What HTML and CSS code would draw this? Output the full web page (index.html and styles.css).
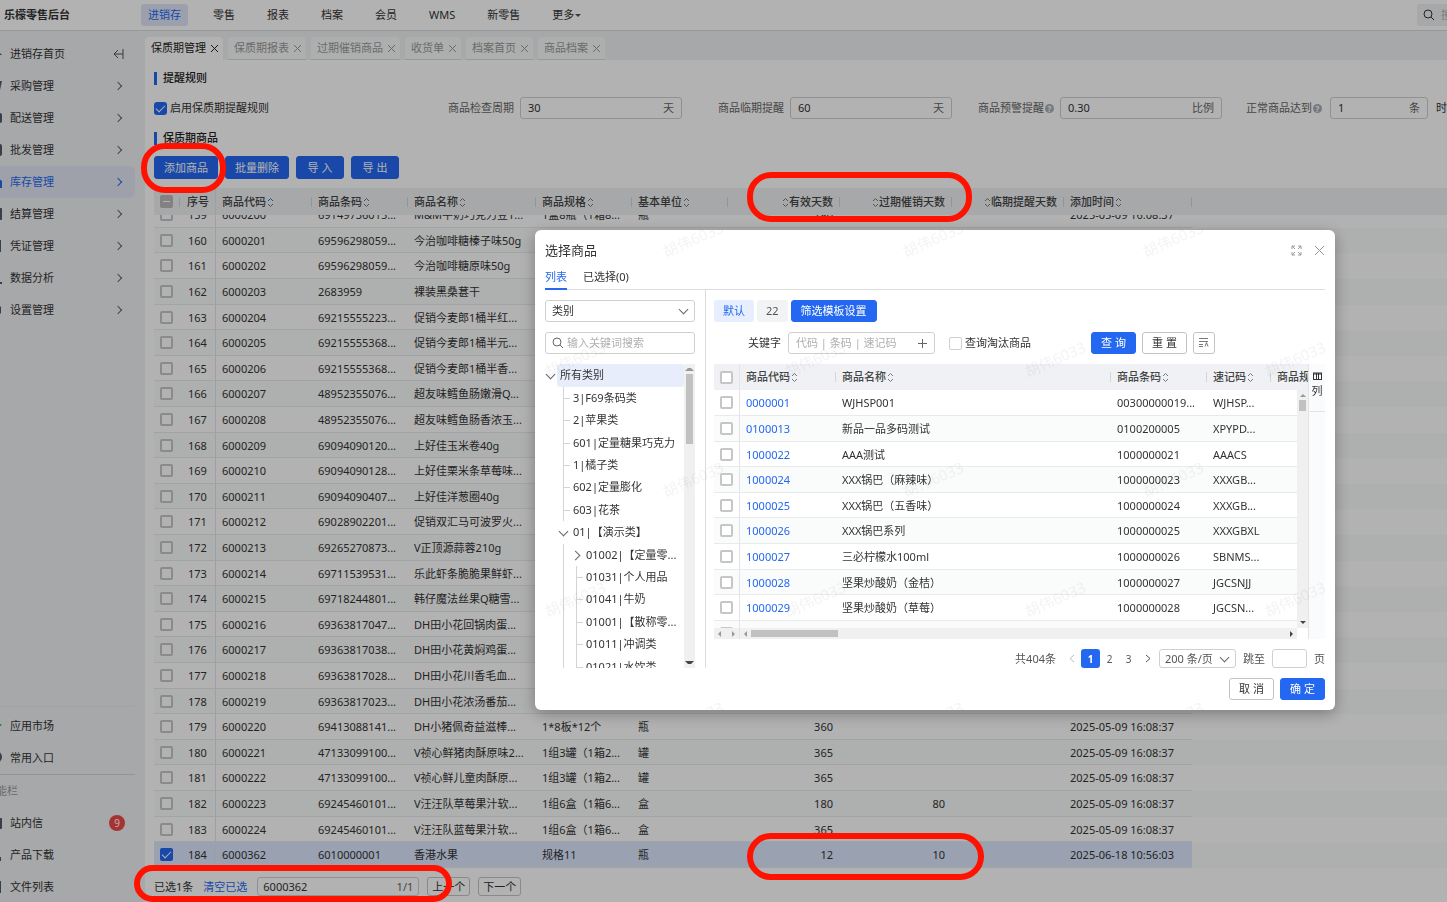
FILE: index.html
```html
<!DOCTYPE html>
<html lang="zh-CN">

<head>
    <meta charset="utf-8">
    <title>保质期管理</title>
    <link rel="stylesheet" href="styles.css">
</head>

<body>
    <div class="app">
        <header class="topbar">
            <span class="brand">乐檬零售后台</span>
            <nav class="topnav">
                <a class="active" href="#">进销存</a>
                <a href="#">零售</a>
                <a href="#">报表</a>
                <a href="#">档案</a>
                <a href="#">会员</a>
                <a href="#">WMS</a>
                <a href="#">新零售</a>
                <a href="#">更多<span class="caret"></span></a>
            </nav>
            <label class="top-search">
                <svg width="12" height="12" viewBox="0 0 12 12"><circle cx="5" cy="5" r="4" /><path d="M8 8l3 3" /></svg>
                <input type="text" placeholder="搜索" aria-label="搜索">
            </label>
        </header>

        <div class="body">
            <aside class="sidebar">
                <ul class="menu">
                    <li><a href="#"><svg class="ico" viewBox="0 0 14 14"><path d="M7 1L14 8H12V13H2V8H0Z" /></svg>进销存首页
                        <svg class="fold" viewBox="0 0 12 12"><path d="M5 2L1 6l4 4M1 6h9M10 1v10" /></svg></a></li>
                    <li><a href="#"><svg class="ico" viewBox="0 0 14 14"><path d="M0 2H14L12 11H2Z" /></svg>采购管理<span class="arrow"></span></a></li>
                    <li><a href="#"><svg class="ico" viewBox="0 0 14 14"><rect y="2" width="14" height="10" rx="2" /></svg>配送管理<span class="arrow"></span></a></li>
                    <li><a href="#"><svg class="ico" viewBox="0 0 14 14"><rect y="1" width="14" height="12" rx="2" /></svg>批发管理<span class="arrow"></span></a></li>
                    <li><a class="active" href="#"><svg class="ico" viewBox="0 0 14 14"><path d="M7 1L14 6V13H0V6Z" /></svg>库存管理<span class="arrow"></span></a></li>
                    <li><a href="#"><svg class="ico" viewBox="0 0 14 14"><rect y="1" width="14" height="12" rx="1" /></svg>结算管理<span class="arrow"></span></a></li>
                    <li><a href="#"><svg class="ico" viewBox="0 0 14 14"><rect y="1" width="13" height="12" /></svg>凭证管理<span class="arrow"></span></a></li>
                    <li><a href="#"><svg class="ico" viewBox="0 0 14 14"><path d="M0 11H14V13H0Z" /></svg>数据分析<span class="arrow"></span></a></li>
                    <li><a href="#"><svg class="ico" viewBox="0 0 14 14"><path d="M4 1H10L13 4V10L10 13H4L0 7Z" /></svg>设置管理<span class="arrow"></span></a></li>
                </ul>
                <div class="menu-bottom">
                    <ul class="menu">
                        <li><a href="#"><svg class="ico green" viewBox="0 0 14 14"><path d="M0 4H11L14 6L11 8H0Z" /></svg>应用市场</a></li>
                        <li><a href="#"><svg class="ico" viewBox="0 0 14 14"><circle cx="8" cy="6" r="6" /></svg>常用入口</a></li>
                    </ul>
                    <p class="menu-title">功能栏</p>
                    <ul class="menu">
                        <li><a href="#"><svg class="ico" viewBox="0 0 14 14"><rect y="2" width="14" height="11" rx="1" /></svg>站内信<span class="badge">9</span></a></li>
                        <li><a href="#"><svg class="ico" viewBox="0 0 14 14"><path d="M0 9H13V13H0Z" /></svg>产品下载</a></li>
                        <li><a href="#"><svg class="ico" viewBox="0 0 14 14"><rect y="1" width="13" height="12" /></svg>文件列表</a></li>
                    </ul>
                </div>
            </aside>

            <main class="main">
                <div class="page-tabs">
                    <a class="active" href="#">保质期管理<span class="x"></span></a>
                    <a href="#">保质期报表<span class="x"></span></a>
                    <a href="#">过期催销商品<span class="x"></span></a>
                    <a href="#">收货单<span class="x"></span></a>
                    <a href="#">档案首页<span class="x"></span></a>
                    <a href="#">商品档案<span class="x"></span></a>
                </div>
                <div class="page">
                    <h2 class="section">提醒规则</h2>
                    <div class="rules">
                        <label class="check"><input type="checkbox" class="cb round" checked>启用保质期提醒规则</label>
                        <div class="field"><label for="cycle">商品检查周期</label>
                            <span class="box"><input id="cycle" type="text" value="30"><i>天</i></span></div>
                        <div class="field"><label for="near">商品临期提醒</label>
                            <span class="box"><input id="near" type="text" value="60"><i>天</i></span></div>
                        <div class="field"><label for="warn">商品预警提醒<b class="help">?</b></label>
                            <span class="box"><input id="warn" type="text" value="0.30"><i>比例</i></span></div>
                        <div class="field last"><label for="reach">正常商品达到<b class="help">?</b></label>
                            <span class="box"><input id="reach" type="text" value="1"><i>条</i></span><span>时</span></div>
                    </div>
                    <h2 class="section">保质期商品</h2>
                    <div class="actions">
                        <button class="btn primary">添加商品</button>
                        <button class="btn primary">批量删除</button>
                        <button class="btn primary wide">导 入</button>
                        <button class="btn primary wide">导 出</button>
                    </div>
                    <div class="grid" id="grid">
                        <table class="table goods">
                            <colgroup><col class="c26"><col class="c36"><col class="c96"><col class="c96"><col class="c128"><col class="c96"><col class="c96"><col class="c112"><col class="c112"><col class="c112"><col class="c128"><col></colgroup>
                            <thead>
                                <tr>
                                    <th class="ck"><input type="checkbox" class="cb some" aria-label="全选"></th>
                                    <th class="seq">序号</th>
                                    <th class="sort asc">商品代码</th>
                                    <th class="sort">商品条码</th>
                                    <th class="sort">商品名称</th>
                                    <th class="sort">商品规格</th>
                                    <th class="sort">基本单位</th>
                                    <th class="sort num">有效天数</th>
                                    <th class="sort num">过期催销天数</th>
                                    <th class="sort num">临期提醒天数</th>
                                    <th class="sort">添加时间</th>
                                    <th class="rest"></th>
                                </tr>
                            </thead>
                            <tbody id="goods"></tbody>
                        </table>
                    </div>
                    <div class="selbar">
                        <span>已选1条</span>
                        <a href="#">清空已选</a>
                        <span class="box"><input type="text" value="6000362" aria-label="查找"><i>1/1</i></span>
                        <button class="btn small">上一个</button>
                        <button class="btn small">下一个</button>
                    </div>
                </div>
            </main>
        </div>
    </div>

    <div class="mask"></div>

    <section class="modal" role="dialog" aria-label="选择商品">
        <div class="modal-head">
            <h1>选择商品</h1>
            <button class="icon-btn" aria-label="全屏"><svg width="11" height="11" viewBox="0 0 11 11"><path d="M1 4V1h3M1 1l3 3M7 1h3v3M10 1L7 4M1 7v3h3M1 10l3-3M10 7v3H7M10 10L7 7" /></svg></button>
            <button class="icon-btn" aria-label="关闭"><svg width="11" height="11" viewBox="0 0 11 11"><path d="M1 1l9 9M10 1l-9 9" /></svg></button>
        </div>
        <div class="modal-tabs">
            <a class="active" href="#">列表</a>
            <a href="#">已选择(0)</a>
        </div>
        <div class="modal-body">
            <div class="cate">
                <div class="select"><select aria-label="类别"><option>类别</option></select></div>
                <label class="box find">
                    <svg width="12" height="12" viewBox="0 0 12 12"><circle cx="5" cy="5" r="4" /><path d="M8 8l3 3" /></svg>
                    <input type="text" placeholder="输入关键词搜索" aria-label="输入关键词搜索">
                </label>
                <div class="tree">
                    <ul id="tree"></ul>
                    <div class="vbar"><span class="up"></span><span class="thumb long"></span><span class="down"></span></div>
                </div>
            </div>
            <div class="list">
                <div class="presets">
                    <button class="tag on">默认</button>
                    <button class="tag">22</button>
                    <button class="btn primary">筛选模板设置</button>
                </div>
                <div class="query">
                    <label for="kw">关键字</label>
                    <span class="box kw"><input id="kw" type="text" placeholder="代码 | 条码 | 速记码">
                        <svg width="11" height="11" viewBox="0 0 11 11"><path d="M5.500 1v9M1 5.500h9" /></svg></span>
                    <label class="check"><input type="checkbox" class="cb light">查询淘汰商品</label>
                    <div class="query-btns">
                        <button class="btn primary w45">查 询</button>
                        <button class="btn w45">重 置</button>
                        <button class="btn square" aria-label="更多条件"><svg width="10" height="10" viewBox="0 0 10 10"><path d="M0 1.500h9M0 4.500h9M0 7.500h4M0 9.500h4M6 9.500l1.500-4l1.500 4" /></svg></button>
                    </div>
                </div>
                <div class="result">
                    <div class="result-main">
                        <div class="view">
                            <table class="table pick">
                                <colgroup><col class="c26"><col class="c96"><col class="c275"><col class="c96"><col class="c64"><col class="c96"></colgroup>
                                <thead>
                                    <tr>
                                        <th class="ck"><input type="checkbox" class="cb" aria-label="全选"></th>
                                        <th class="sort">商品代码</th>
                                        <th class="sort">商品名称</th>
                                        <th class="sort">商品条码</th>
                                        <th class="sort">速记码</th>
                                        <th>商品规格</th>
                                    </tr>
                                </thead>
                                <tbody id="pick"></tbody>
                            </table>
                            <div class="vbar"><span class="up"></span><span class="thumb"></span><span class="down"></span></div>
                        </div>
                        <div class="hbar">
                            <div class="hpart"><span class="left"></span><span class="right"></span></div>
                            <div class="hpart grow"><span class="left"></span><span class="thumb"></span><span class="right dark"></span></div>
                        </div>
                    </div>
                    <div class="cols">
                        <button><svg width="9" height="8" viewBox="0 0 9 8"><path d="M0 1h9M0 2h9M0 7.500h9M0.500 1v6M3.500 1v6M5.500 1v6M8.500 1v6" /></svg>列</button>
                    </div>
                </div>
                <div class="pager">
                    <span class="total">共404条</span>
                    <button class="pg off" aria-label="上一页"><svg width="6" height="9" viewBox="0 0 6 9"><path d="M5 1L1 4.500L5 8" /></svg></button>
                    <button class="pg on">1</button>
                    <button class="pg">2</button>
                    <button class="pg">3</button>
                    <button class="pg" aria-label="下一页"><svg width="6" height="9" viewBox="0 0 6 9"><path d="M1 1l4 3.500L1 8" /></svg></button>
                    <div class="select size"><select aria-label="每页条数"><option>200 条/页</option></select></div>
                    <label for="jump">跳至</label>
                    <input id="jump" class="jump" type="text">
                    <span>页</span>
                </div>
            </div>
        </div>
        <div class="modal-foot">
            <button class="btn w45">取 消</button>
            <button class="btn primary w45">确 定</button>
        </div>
        <div class="wm" id="wm" aria-hidden="true"></div>
    </section>

    <div class="marks">
        <span class="mark add"></span>
        <span class="mark days"></span>
        <span class="mark vals"></span>
        <span class="mark sel"></span>
    </div>

    <script src="script.js"></script>
</body>

</html>
```

FILE: styles.css
```css
* {
    box-sizing: border-box;
}

body {
    margin: 0;
    height: 100vh;
    overflow: hidden;
    font: 11px/16px "Noto Sans", "Noto Sans CJK SC", sans-serif;
    color: #333;
    background: #fff;
}

a {
    color: inherit;
    text-decoration: none;
}

ul {
    margin: 0;
    padding: 0;
    list-style: none;
}

input,
button,
select {
    font: inherit;
    color: inherit;
}

svg {
    fill: none;
    stroke: currentColor;
    flex: none;
}

.app {
    display: flex;
    flex-direction: column;
    height: 100vh;
    isolation: isolate;
}

/* top bar */
.topbar {
    display: flex;
    align-items: center;
    height: 31px;
    border-bottom: 1px solid #d9dadc;
    overflow: hidden;
    flex: none;
}

.brand {
    width: 141px;
    padding-left: 4px;
    font-weight: bold;
}

.topnav {
    display: flex;
    gap: 18px;
}

.topnav a {
    padding: 3px 7px;
    border-radius: 3px;
}

.topnav .active {
    background: #dfe5f7;
    color: #2468f2;
}

.caret {
    display: inline-block;
    margin-left: 1px;
    vertical-align: 2px;
    border: 3px solid transparent;
    border-top-color: #555;
    border-bottom: 0;
}

.top-search {
    display: flex;
    align-items: center;
    gap: 6px;
    width: 100px;
    height: 22px;
    margin: 0 -70px 0 auto;
    padding-left: 6px;
    border-radius: 3px;
    background: #eff1f4;
}

.top-search input {
    width: 60px;
    border: 0;
    padding: 0;
    background: none;
}

::placeholder {
    color: #b0b0b0;
    opacity: 1;
}

/* side menu */
.body {
    display: flex;
    flex: 1;
    min-height: 0;
}

.sidebar {
    display: flex;
    flex-direction: column;
    justify-content: space-between;
    width: 145px;
    padding-top: 7px;
    padding-right: 10px;
    background: #eff1f4;
    overflow: hidden;
    flex: none;
}

.menu a {
    display: flex;
    align-items: center;
    height: 32px;
    padding-right: 10px;
    border-radius: 0 6px 6px 0;
}

.menu .active {
    background: #e2e7f3;
    color: #2468f2;
}

.ico {
    width: 14px;
    height: 14px;
    margin: 0 8px 0 -12px;
    fill: #555a66;
    stroke: none;
}

.active .ico {
    fill: #2468f2;
}

.ico.green {
    fill: #2fbf4a;
}

.fold {
    width: 12px;
    height: 12px;
    margin-left: auto;
    color: #555;
}

.arrow {
    width: 6px;
    height: 6px;
    margin: 0 4px 0 auto;
    border: solid #666;
    border-width: 1px 1px 0 0;
    transform: rotate(45deg);
}

.active .arrow {
    border-color: #2468f2;
}

.menu-bottom {
    margin-bottom: -1px;
    border-top: 1px solid #e6e8eb;
    padding-top: 3px;
}

.menu-title {
    margin: 0 0 0 -15px;
    padding: 8px 0;
    border-top: 1px solid #d3d5d9;
    color: #999;
}

.badge {
    width: 16px;
    height: 16px;
    margin-left: auto;
    border-radius: 8px;
    background: #f04848;
    color: #fff;
    font-size: 10px;
    text-align: center;
}

/* page tabs */
.main {
    display: flex;
    flex-direction: column;
    flex: 1;
    min-width: 0;
}

.page-tabs {
    display: flex;
    align-items: flex-end;
    gap: 5px;
    height: 29px;
    background: #eff1f4;
    flex: none;
}

.page-tabs a {
    display: flex;
    align-items: center;
    gap: 5px;
    height: 23px;
    padding: 0 5px 0 6px;
    border-radius: 4px 4px 0 0;
    border-bottom: 1px solid #d9dadc;
    background: #f8f9fa;
    color: #999;
}

.page-tabs .active {
    background: #fff;
    border-color: #fff;
    color: #222;
}

.x {
    width: 7px;
    height: 7px;
    background:
        linear-gradient(45deg, transparent 43%, currentColor 43%, currentColor 57%, transparent 57%),
        linear-gradient(-45deg, transparent 43%, currentColor 43%, currentColor 57%, transparent 57%);
}

/* page content */
.page {
    display: flex;
    flex-direction: column;
    flex: 1;
    min-height: 0;
    padding: 10px 0 0 9px;
    overflow: hidden;
}

.section {
    display: flex;
    align-items: center;
    gap: 6px;
    margin: 0;
    font-size: 11px;
    font-weight: 500;
    color: #222;
}

.section::before {
    content: "";
    width: 3px;
    height: 13px;
    background: #2468f2;
}

.rules {
    display: flex;
    align-items: center;
    margin: 11px 0;
    white-space: nowrap;
}

.rules > .check {
    width: 258px;
    flex: none;
}

.check {
    display: flex;
    align-items: center;
    gap: 3px;
}

.field {
    display: flex;
    align-items: center;
    justify-content: flex-end;
    gap: 6px;
    width: 270px;
    flex: none;
}

.field label {
    display: flex;
    align-items: center;
    gap: 1px;
    color: #666;
}

.field.last {
    justify-content: flex-start;
    gap: 8px;
    width: auto;
    padding-left: 24px;
}

.field.last .box {
    width: 98px;
}

.help {
    width: 9px;
    height: 9px;
    border-radius: 5px;
    background: #a9aeb8;
    color: #fff;
    font-size: 8px;
    line-height: 9px;
    text-align: center;
}

.box {
    display: flex;
    align-items: center;
    width: 162px;
    height: 22px;
    padding: 0 7px;
    border: 1px solid #d0d0d0;
    border-radius: 3px;
    background: #fff;
}

.box input {
    flex: 1;
    width: 0;
    min-width: 0;
    padding: 0;
    border: 0;
    background: none;
    outline: 0;
}

.box i {
    font-style: normal;
    color: #666;
}

.cb {
    appearance: none;
    width: 13px;
    height: 13px;
    margin: 0;
    border: 2px solid #c6c6c6;
    border-radius: 2px;
    background: #fff;
    flex: none;
}

.cb.light {
    border: 1px solid #d0d0d0;
}

.cb:checked {
    border: 0;
    background: #2468f2;
}

.cb.round {
    border-radius: 3px;
}

.cb:checked::before {
    content: "";
    display: block;
    width: 8px;
    height: 4px;
    margin: 3px 0 0 2px;
    border: solid #fff;
    border-width: 0 0 1px 1px;
    transform: rotate(-45deg);
}

.cb.some {
    border-color: #bbb;
    background: linear-gradient(#fff, #fff) center / 7px 1px no-repeat #bbb;
}

.actions {
    display: flex;
    gap: 7px;
    margin: 10px 0 9px;
}

.actions .btn {
    height: 23px;
}

.btn {
    height: 22px;
    padding: 0 9px;
    border: 1px solid #c4c4c4;
    border-radius: 3px;
    background: #fff;
    white-space: nowrap;
}

.btn.primary {
    border-color: #2468f2;
    background: #2468f2;
    color: #fff;
}

.btn.wide {
    width: 48px;
}

.btn.w45 {
    width: 45px;
    padding: 0;
}

.btn.square {
    width: 22px;
    padding: 0 5px;
    color: #777;
}

.btn.small {
    width: 43px;
    height: 19px;
    padding: 0;
    line-height: 16px;
}

/* tables */
.grid {
    flex: 1;
    min-height: 0;
    overflow: hidden;
}

.table {
    table-layout: fixed;
    width: 100%;
    border-spacing: 0;
}

.c26 { width: 26px; }
.c36 { width: 36px; }
.c64 { width: 64px; }
.c96 { width: 96px; }
.c112 { width: 112px; }
.c128 { width: 128px; }
.c275 { width: 275px; }

.table th {
    position: sticky;
    top: 0;
    height: 27px;
    padding: 0 6px;
    background: linear-gradient(#d4d6d9, #d4d6d9) right center / 1px 10px no-repeat #eff1f4;
    font-weight: 500;
    text-align: left;
    white-space: nowrap;
    color: #444;
    z-index: 1;
}

.pick th {
    height: 26px;
}

.table th.rest,
.pick th.ck {
    background: #eff1f4;
}

.table th.seq,
.pick th.ck {
    border-right: 1px solid #e2e4e7;
}

.table th.seq {
    background: #eff1f4;
}

.table td {
    height: 26px;
    padding: 1px 6px 0;
    border-bottom: 1px solid #e9eaec;
    white-space: nowrap;
    overflow: hidden;
}

.table td.ck {
    padding-top: 0;
}

.goods tr:nth-child(5n+2) td,
.goods tr:nth-child(5n) td,
.pick tr:nth-child(5n+3) td,
.pick tr:nth-child(5n) td {
    height: 25px;
}

.table tbody tr:nth-child(even) td {
    background: #fafbfb;
}

.table .rest {
    border: 0;
    background: #fff;
}

.table tbody tr .rest {
    background: #fff;
}

.table tbody tr.on td:not(.rest) {
    background: #dde8ff;
}

.goods td.seq,
.pick td.ck {
    border-right: 1px solid #e2e4e7;
}

.ck .cb {
    display: block;
}

.table .seq {
    padding-left: 7px;
    padding-right: 0;
}

.table td.seq {
    padding-left: 8px;
}

.table .num {
    padding-right: 7px;
    text-align: right;
}

.pick td a {
    color: #2468f2;
}

.sort svg {
    margin-left: 1px;
    vertical-align: -2px;
    color: #777;
}

.sort.asc .u {
    stroke: #2468f2;
}

.selbar {
    display: flex;
    align-items: center;
    height: 34px;
    gap: 8px;
    padding-top: 3px;
    flex: none;
}

.selbar a {
    margin: 0 2px;
    color: #2468f2;
}

.selbar .box {
    height: 19px;
    padding: 0 5px;
}

/* dialog */
.mask {
    position: fixed;
    inset: 0;
    background: rgba(0, 0, 0, 0.3);
}

.modal {
    position: fixed;
    top: 230px;
    right: 112px;
    display: flex;
    flex-direction: column;
    width: 800px;
    height: 480px;
    padding: 10px 10px;
    border-radius: 6px;
    background: #fff;
    box-shadow: 0 4px 16px rgba(0, 0, 0, 0.3);
    overflow: hidden;
}

.modal-head {
    display: flex;
    align-items: center;
    gap: 12px;
    height: 20px;
}

.modal-head h1 {
    margin: 0 auto 0 0;
    font-size: 13px;
    font-weight: 400;
}

.icon-btn {
    display: flex;
    padding: 0;
    border: 0;
    background: none;
    color: #999;
}

.modal-tabs {
    display: flex;
    gap: 16px;
    height: 30px;
    border-bottom: 1px solid #dcdcdc;
}

.modal-tabs a {
    height: 30px;
    padding-top: 9px;
}

.modal-tabs .active {
    border-bottom: 2px solid #2468f2;
    color: #2468f2;
}

.modal-body {
    display: flex;
    flex: 1;
    min-height: 0;
}

.cate {
    display: flex;
    flex-direction: column;
    gap: 10px;
    width: 161px;
    padding: 10px 10px 0 0;
    border-right: 1px solid #dcdcdc;
    flex: none;
}

.cate .box {
    width: 100%;
    gap: 3px;
    padding: 0 6px;
    color: #666;
}

.select {
    position: relative;
    height: 22px;
}

.select select {
    appearance: none;
    width: 100%;
    height: 100%;
    padding: 0 6px;
    border: 1px solid #d0d0d0;
    border-radius: 3px;
    background: #fff;
}

.select::after {
    content: "";
    position: absolute;
    right: 8px;
    top: calc(50% - 5px);
    width: 6px;
    height: 6px;
    border: solid #666;
    border-width: 0 1px 1px 0;
    transform: rotate(45deg);
}

.tree {
    display: flex;
    height: 304px;
    overflow: hidden;
}

.tree ul {
    flex: 1;
}

.tree li {
    display: flex;
    height: 22px;
    line-height: 22px;
    white-space: nowrap;
}

.tree li:nth-child(5n+1),
.tree li:nth-child(5n+3) {
    height: 23px;
}

.tree li::before {
    content: "";
    width: 12px;
    flex: none;
}

.tree .root::before {
    display: none;
}

.tree .root b {
    width: 12px;
}

.tree .root span {
    flex: 1;
    border-radius: 3px;
    background: #e8edfc;
}

.tree span {
    padding-left: 3px;
}

.tree b {
    width: 13px;
    flex: none;
}

.line {
    background: linear-gradient(#d4d4d4, #d4d4d4) 6px 0 / 1px 100% no-repeat;
}

.line.tick {
    background:
        linear-gradient(#d4d4d4, #d4d4d4) 6px 0 / 1px 100% no-repeat,
        linear-gradient(#d4d4d4, #d4d4d4) 6px 50% / 7px 1px no-repeat;
}

.open::before,
.shut::before {
    content: "";
    display: block;
    width: 6px;
    height: 6px;
    margin: 7px 0 0 3px;
    border: solid #666;
    border-width: 0 1px 1px 0;
    transform: rotate(45deg);
}

.root .open::before {
    margin-left: 2px;
}

.shut::before {
    margin: 8px 0 0 2px;
    transform: rotate(-45deg);
}

.vbar {
    display: flex;
    flex-direction: column;
    align-items: center;
    width: 11px;
    padding: 4px 0;
    background: #f0f0f0;
}

.thumb {
    width: 7px;
    height: 11px;
    margin-top: 3px;
    background: #c1c1c1;
}

.thumb.long {
    height: 70px;
}

.up,
.down,
.left,
.right {
    border: 3px solid transparent;
}

.up {
    border-top: 0;
    border-bottom-color: #999;
}

.down {
    margin-top: auto;
    border-bottom: 0;
    border-top-color: #444;
}

.left {
    border-left: 0;
    border-right-color: #999;
}

.right {
    margin-left: auto;
    border-right: 0;
    border-left-color: #999;
}

.dark {
    border-left-color: #444;
}

.list {
    display: flex;
    flex-direction: column;
    gap: 10px;
    flex: 1;
    min-width: 0;
    padding: 10px 0 0 8px;
}

.presets {
    display: flex;
    gap: 3px;
}

.tag {
    height: 22px;
    padding: 0 9px;
    border: 0;
    border-radius: 3px;
    background: #f2f3f5;
    color: #555;
}

.tag.on {
    background: #e6eeff;
    color: #2468f2;
}

.query {
    display: flex;
    align-items: center;
    gap: 7px;
    padding-left: 34px;
}

.kw {
    width: 147px;
    margin-right: 7px;
    padding-right: 6px;
    color: #666;
}

.query-btns {
    display: flex;
    gap: 6px;
    margin: 0 110px 0 auto;
}

.result {
    display: flex;
    height: 275px;
}

.result-main {
    flex: 1;
    min-width: 0;
}

.view {
    position: relative;
    height: 264px;
    overflow: hidden;
}

.table.pick {
    width: 653px;
}

.view .vbar {
    position: absolute;
    top: 26px;
    right: 0;
    bottom: 0;
    z-index: 2;
}

.hbar {
    display: flex;
    height: 11px;
    padding-right: 11px;
}

.hpart {
    display: flex;
    align-items: center;
    width: 26px;
    padding: 0 4px;
    border-right: 1px solid #e2e4e7;
    background: #f0f0f0;
}

.hpart.grow {
    flex: 1;
    border: 0;
}

.hbar .thumb {
    width: 87px;
    height: 7px;
    margin: 0 0 0 4px;
}

.cols {
    width: 17px;
    border-left: 1px solid #e2e4e7;
    background: #fafbfd;
}

.cols button {
    display: flex;
    flex-direction: column;
    align-items: center;
    gap: 3px;
    width: 16px;
    height: 48px;
    padding: 8px 0 0;
    border: 0;
    border-bottom: 1px solid #e2e4e7;
    background: none;
}

.pager {
    display: flex;
    align-items: center;
    justify-content: flex-end;
    gap: 7px;
    height: 19px;
    color: #555;
}

.pg {
    display: flex;
    align-items: center;
    justify-content: center;
    width: 19px;
    height: 19px;
    margin-left: -7px;
    padding: 0;
    border: 0;
    border-radius: 3px;
    background: none;
    font-size: 10px;
}

.total {
    margin-right: 6px;
}

.pg.off {
    color: #bbb;
}

.pg.on {
    background: #2468f2;
    color: #fff;
    font-weight: bold;
}

.size {
    width: 77px;
    height: 19px;
    margin-left: -5px;
}

.size select {
    padding: 0 5px;
}

.jump {
    width: 35px;
    height: 19px;
    border: 1px solid #d0d0d0;
    border-radius: 3px;
}

.modal-foot {
    display: flex;
    justify-content: flex-end;
    gap: 6px;
    padding-top: 10px;
}

/* staggered user watermark */
.wm {
    position: absolute;
    inset: -51px 0 0 0;
    pointer-events: none;
    overflow: hidden;
    z-index: 3;
}

.wm div {
    display: flex;
    width: 1200px;
    height: 120px;
    margin-left: 38px;
}

.wm div:nth-child(even) {
    margin-left: -80px;
}

.wm span {
    display: flex;
    align-items: center;
    justify-content: center;
    width: 240px;
    color: rgba(0, 0, 0, 0.05);
    font-size: 15px;
    transform: rotate(-24deg);
}

/* red outlines */
.mark {
    position: fixed;
    border: 6px solid #ff1200;
    border-radius: 24px;
    pointer-events: none;
}

.add {
    left: 141px;
    top: 143px;
    width: 85px;
    height: 50px;
}

.days {
    left: 747px;
    top: 172px;
    width: 225px;
    height: 50px;
}

.vals {
    left: 747px;
    top: 833px;
    width: 237px;
    height: 47px;
}

.sel {
    left: 134px;
    top: 865px;
    width: 318px;
    height: 37px;
}
```

FILE: script.js
```javascript
// code, barcode, name, spec, unit, valid days, overdue days, time
var T = '2025-05-09 16:08:37';
var goods = [
    ['6000200', '69149736015...', 'M&amp;M牛奶巧克力豆1...', '1盒8瓶（1箱8...', '瓶', '180', '', T],
    ['6000201', '69596298059...', '今治咖啡糖榛子味50g'],
    ['6000202', '69596298059...', '今治咖啡糖原味50g'],
    ['6000203', '2683959', '裸装黑桑葚干'],
    ['6000204', '69215555223...', '促销今麦郎1桶半红...'],
    ['6000205', '69215555368...', '促销今麦郎1桶半元...'],
    ['6000206', '69215555368...', '促销今麦郎1桶半香...'],
    ['6000207', '48952355076...', '超友味鳕鱼肠嫩滑Q...'],
    ['6000208', '48952355076...', '超友味鳕鱼肠香浓玉...'],
    ['6000209', '69094090120...', '上好佳玉米卷40g'],
    ['6000210', '69094090128...', '上好佳栗米条草莓味...'],
    ['6000211', '69094090407...', '上好佳洋葱圈40g'],
    ['6000212', '69028902201...', '促销双汇马可波罗火...'],
    ['6000213', '69265270873...', 'V正顶源蒜蓉210g'],
    ['6000214', '69711539531...', '乐此虾条脆脆果鲜虾...'],
    ['6000215', '69718244801...', '韩仔魔法丝果Q糖雪...'],
    ['6000216', '69363817047...', 'DH田小花回锅肉蛋...'],
    ['6000217', '69363817038...', 'DH田小花黄焖鸡蛋...'],
    ['6000218', '69363817028...', 'DH田小花川香毛血...'],
    ['6000219', '69363817023...', 'DH田小花浓汤番茄...'],
    ['6000220', '69413088141...', 'DH小猪佩奇益滋棒...', '1*8板*12个', '瓶', '360', '', T],
    ['6000221', '47133099100...', 'V祯心鲜猪肉酥原味2...', '1组3罐（1箱2...', '罐', '365', '', T],
    ['6000222', '47133099100...', 'V祯心鲜儿童肉酥原...', '1组3罐（1箱2...', '罐', '365', '', T],
    ['6000223', '69245460101...', 'V汪汪队草莓果汁软...', '1组6盒（1箱6...', '盒', '180', '80', T],
    ['6000224', '69245460101...', 'V汪汪队蓝莓果汁软...', '1组6盒（1箱6...', '盒', '365', '', T],
    ['6000362', '6010000001', '香港水果', '规格11', '瓶', '12', '10', '2025-06-18 10:56:03']
];

var html = '';
goods.forEach(function(g, i) {
    var on = g[0] == '6000362';
    html += '<tr' + (on ? ' class="on"' : '') + '><td class="ck"><input type="checkbox" class="cb" aria-label="选择"' + (on ? ' checked' : '') + '></td>';
    html += '<td class="seq">' + (159 + i) + '</td>';
    for (var k = 0; k < 5; k++) html += '<td>' + (g[k] || '') + '</td>';
    html += '<td class="num">' + (g[5] || '') + '</td><td class="num">' + (g[6] || '') + '</td><td></td>';
    html += '<td>' + (g[7] || '') + '</td><td class="rest"></td></tr>';
});
document.getElementById('goods').innerHTML = html;

var pick = [
    ['0000001', 'WJHSP001', '00300000019...', 'WJHSP...'],
    ['0100013', '新品一品多码测试', '0100200005', 'XPYPD...'],
    ['1000022', 'AAA测试', '1000000021', 'AAACS'],
    ['1000024', 'XXX锅巴（麻辣味）', '1000000023', 'XXXGB...'],
    ['1000025', 'XXX锅巴（五香味）', '1000000024', 'XXXGB...'],
    ['1000026', 'XXX锅巴系列', '1000000025', 'XXXGBXL'],
    ['1000027', '三必柠檬水100ml', '1000000026', 'SBNMS...'],
    ['1000028', '坚果炒酸奶（金桔）', '1000000027', 'JGCSNJJ'],
    ['1000029', '坚果炒酸奶（草莓）', '1000000028', 'JGCSN...'],
    ['', '', '', '']
];
html = '';
pick.forEach(function(p) {
    html += '<tr><td class="ck"><input type="checkbox" class="cb" aria-label="选择"></td><td><a href="#">' + p[0] + '</a></td><td>' +
        p[1] + '</td><td>' + p[2] + '</td><td>' + p[3] + '</td><td></td></tr>';
});
document.getElementById('pick').innerHTML = html;

// category tree: cells in front of the label, then the label
var tree = [
    ['open', '所有类别'],
    ['line tick', '3|F69条码类'],
    ['line tick', '2|苹果类'],
    ['line tick', '601|定量糖果巧克力'],
    ['line tick', '1|橘子类'],
    ['line tick', '602|定量膨化'],
    ['line tick', '603|花茶'],
    ['open', '01|【演示类】'],
    ['line,shut', '01002|【定量零...'],
    ['line,line tick', '01031|个人用品'],
    ['line,line tick', '01041|牛奶'],
    ['line,line tick', '01001|【散称零...'],
    ['line,line tick', '01011|冲调类'],
    ['line,line tick', '01021|水饮类']
];
html = '';
tree.forEach(function(t, i) {
    html += '<li' + (i == 0 ? ' class="root"' : '') + '>';
    t[0].split(',').forEach(function(c) { html += '<b class="' + c + '"></b>'; });
    html += '<span>' + t[1] + '</span></li>';
});
document.getElementById('tree').innerHTML = html;

// sort arrows
var arrows = '<svg width="7" height="11" viewBox="0 0 7 11"><path class="u" d="M1 4L3.500 1.500L6 4"/><path d="M1 7L3.500 9.500L6 7"/></svg>';
document.querySelectorAll('th.sort').forEach(function(th) {
    th.insertAdjacentHTML(th.classList.contains('num') ? 'afterbegin' : 'beforeend', arrows);
});

html = '';
for (var r = 0; r < 5; r++) {
    html += '<div>';
    for (var c = 0; c < 4; c++) html += '<span>胡伟6033</span>';
    html += '</div>';
}
document.getElementById('wm').innerHTML = html;

var grid = document.getElementById('grid');
grid.scrollTop = grid.scrollHeight;
```
